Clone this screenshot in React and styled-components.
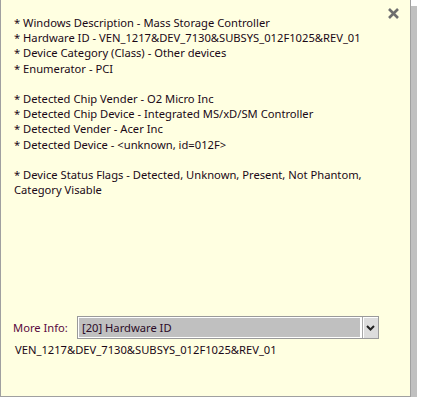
import React from "react";
import styled, { createGlobalStyle } from "styled-components";

const GlobalStyle = createGlobalStyle`
  html, body {
    margin: 0;
    padding: 0;
    background: #ffffff;
  }
  body {
    font-family: "Noto Sans", "Open Sans", sans-serif;
  }
`;

const notes = [
  "* Windows Description - Mass Storage Controller",
  "* Hardware ID - VEN_1217&DEV_7130&SUBSYS_012F1025&REV_01",
  "* Device Category (Class) - Other devices",
  "* Enumerator - PCI",
  "",
  "* Detected Chip Vender - O2 Micro Inc",
  "* Detected Chip Device - Integrated MS/xD/SM Controller",
  "* Detected Vender - Acer Inc",
  "* Detected Device - <unknown, id=012F>",
  "",
  "* Device Status Flags - Detected, Unknown, Present, Not Phantom, Category Visable",
];

const Panel = styled.div`
  position: relative;
  box-sizing: border-box;
  width: 411px;
  height: 397px;
  background: #ffffe1;
  border: 1px solid #a0a0a0;
  border-top: none;
  box-shadow: 6px 6px 0 #c0c0c0;
  display: flex;
  flex-direction: column;
  padding: 15px 31px 39px 12px;
  color: #1a0816;
  font-size: 11.2px;
`;

const CloseButton = styled.button`
  position: absolute;
  top: 7px;
  right: 10px;
  width: 13px;
  height: 13px;
  padding: 0;
  border: none;
  background: transparent;
  cursor: pointer;
  svg {
    display: block;
  }
`;

const Notes = styled.div`
  flex: 1;
  padding-left: 1px;
  line-height: 15.2px;
  width: 356px;
`;

const Line = styled.div`
  min-height: 15.2px;
  white-space: pre-wrap;
`;

const Footer = styled.div`
  display: flex;
  flex-direction: column;
`;

const MoreRow = styled.div`
  display: flex;
  align-items: center;
  height: 23px;
`;

const Label = styled.span`
  width: 64px;
  color: #5a0a40;
`;

const Select = styled.div`
  flex: 1;
  display: flex;
  height: 23px;
  box-sizing: border-box;
  border: 1px solid #9a9a9a;
  background: #ffffff;
`;

const Field = styled.div`
  flex: 1;
  margin: 1px 2px 1px 1px;
  background: #c0c0c0;
  padding-left: 3px;
  display: flex;
  align-items: center;
  color: #2a0a26;
`;

const Arrow = styled.div`
  width: 16px;
  box-sizing: border-box;
  background: #dcdcdc;
  border-left: 1px solid #a8a8a8;
  box-shadow: inset 1px 1px 0 #ffffff;
  display: flex;
  align-items: center;
  justify-content: center;
`;

const Value = styled.div`
  margin-top: 3px;
  padding-left: 2px;
  line-height: 15px;
`;

export default function App() {
  return (
    <>
      <GlobalStyle />
      <Panel>
        <CloseButton aria-label="Close">
          <svg width="13" height="13" viewBox="0 0 13 13">
            <path d="M2 2 L11 11 M11 2 L2 11" stroke="#6e6e6e" strokeWidth="2.6" />
          </svg>
        </CloseButton>
        <Notes>
          {notes.map((n, i) => (
            <Line key={i}>{n}</Line>
          ))}
        </Notes>
        <Footer>
          <MoreRow>
            <Label>More Info:</Label>
            <Select>
              <Field>[20] Hardware ID</Field>
              <Arrow>
                <svg width="9" height="6" viewBox="0 0 9 6">
                  <path d="M1 1 L4.5 4.5 L8 1" fill="none" stroke="#222" strokeWidth="2" />
                </svg>
              </Arrow>
            </Select>
          </MoreRow>
          <Value>VEN_1217&DEV_7130&SUBSYS_012F1025&REV_01</Value>
        </Footer>
      </Panel>
    </>
  );
}
